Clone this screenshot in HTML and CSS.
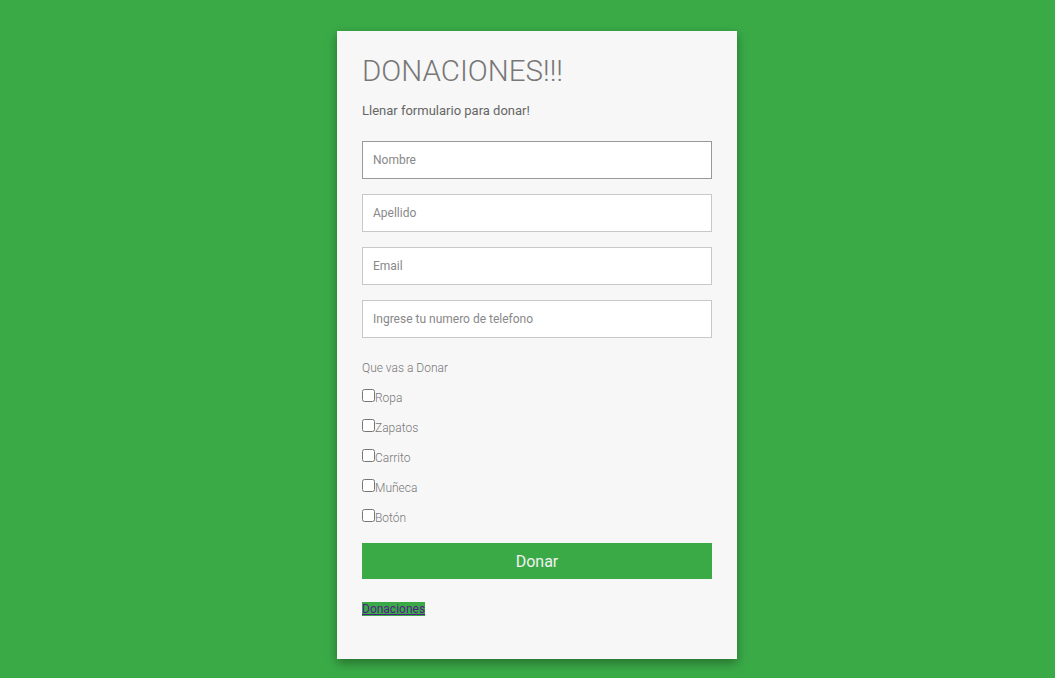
FILE: index.html
```html
<!DOCTYPE html>
<html lang="es">
<head>
<meta charset="utf-8">
<title>Donaciones</title>
<link rel="stylesheet" href="styles.css">
</head>
<body>
<div class="page">
  <div class="card">
    <h1 class="title">DONACIONES!!!</h1>
    <p class="subtitle">Llenar formulario para donar!</p>
    <form class="form">
      <input class="field field-focus" type="text" placeholder="Nombre">
      <input class="field" type="text" placeholder="Apellido">
      <input class="field" type="text" placeholder="Email">
      <input class="field" type="text" placeholder="Ingrese tu numero de telefono">
      <p class="question">Que vas a Donar</p>
      <label class="check"><input type="checkbox" class="box">Ropa</label>
      <label class="check"><input type="checkbox" class="box">Zapatos</label>
      <label class="check"><input type="checkbox" class="box">Carrito</label>
      <label class="check"><input type="checkbox" class="box">Muñeca</label>
      <label class="check"><input type="checkbox" class="box">Botón</label>
      <button type="button" class="btn">Donar</button>
    </form>
    <div class="links"><a class="link" href="#">Donaciones</a></div>
  </div>
</div>
</body>
</html>
```
FILE: styles.css
```css
html, body {
  margin: 0;
  padding: 0;
  height: 100%;
}
body {
  background: #3aaa47;
  font-family: Roboto, "Noto Sans", sans-serif;
}
.page {
  display: flex;
  justify-content: center;
  padding-top: 31px;
  padding-left: 19px;
}
.card {
  width: 400px;
  height: 628px;
  box-sizing: border-box;
  background: #f7f7f7;
  padding: 23px 25px 0 25px;
  box-shadow: 0 4px 10px rgba(0,0,0,0.35);
}
.title {
  margin: 0;
  font-size: 29.5px;
  font-weight: 300;
  color: #777;
  line-height: 35px;
}
.subtitle {
  margin: 14px 0 0 0;
  font-size: 13px;
  line-height: 15px;
  color: #666;
}
.form {
  display: block;
  margin-top: 23px;
}
.field {
  display: block;
  width: 350px;
  height: 38px;
  box-sizing: border-box;
  margin: 0 0 15px 0;
  padding: 0 10px;
  border: 1px solid #c8c8c8;
  background: #fff;
  font-family: Roboto, sans-serif;
  font-size: 12px;
  color: #555;
  outline: none;
}
.field-focus {
  border-color: #999;
}
.field::placeholder {
  color: #888;
}
.question {
  margin: 23px 0 8px 0;
  font-size: 12px;
  font-weight: 300;
  line-height: 14px;
  color: #777;
}
.check {
  display: block;
  font-size: 12px;
  font-weight: 300;
  line-height: 30px;
  color: #777;
}
.box {
  margin: 0;
  width: 13px;
  height: 13px;
  vertical-align: baseline;
}
.btn {
  display: block;
  margin-top: 10px;
  width: 350px;
  height: 36px;
  border: none;
  background: #3aaa47;
  color: #f1f1f1;
  font-family: Roboto, sans-serif;
  font-size: 16px;
  cursor: pointer;
}
.links {
  margin-top: 22px;
  line-height: 14px;
}
.link {
  background: #3aaa47;
  color: #551a8b;
  font-size: 12px;
  text-decoration: underline;
}
```
